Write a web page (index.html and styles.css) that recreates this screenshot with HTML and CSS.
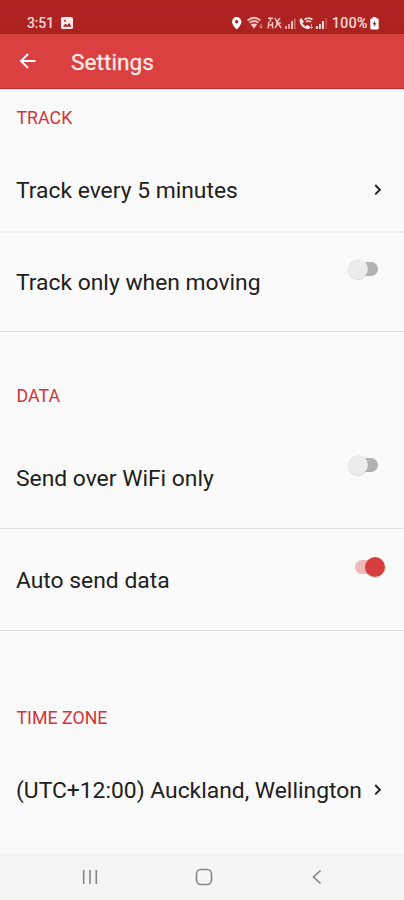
FILE: index.html
```html
<!DOCTYPE html>
<html lang="en">
<head>
<meta charset="utf-8">
<title>Settings</title>
<link rel="stylesheet" href="styles.css">
</head>
<body>
<div class="screen">
  <div class="status">
    <span class="time">3:51</span>
    <svg class="picture" width="12" height="12" viewBox="0 0 12 12"><rect width="12" height="12" rx="1.8" fill="#ffeceb"/><path d="M1.800 9.800 4.500 6.400l1.800 1.800 2-2.300 2.200 3.900z" fill="#ad2422"/><circle cx="4" cy="3.700" r="1" fill="#ad2422"/></svg>
    <svg class="indicators" width="98" height="16" viewBox="231 15 98 16" fill="none">
      <path fill="#fff" fill-rule="evenodd" d="M236.700 17a4.700 4.700 0 0 0-4.700 4.700c0 3.300 4.700 7.800 4.700 7.800s4.700-4.500 4.700-7.800a4.700 4.700 0 0 0-4.700-4.700zm0 3.100a1.700 1.700 0 1 1 0 3.400 1.700 1.700 0 0 1 0-3.400z"/>
      <g stroke="#f3c1be" stroke-width="1.800"><path d="M247.500 20.500q6.500-5.500 13 0M249.500 22.900q4.500-3.700 9 0"/><path d="M261 24v4m-1.500-1.500 1.500 1.500 1.500-1.500" stroke-width=".8"/></g>
      <path fill="#f6cbc8" d="m250.800 24.600 3.200 4 3.200-4q-3.200-2.200-6.400 0z"/>
      <path stroke="#f3c1be" stroke-width="1.500" d="M268 18.300h5M270.500 18v3.500M269 21.500l-1 7M272.500 22v6.500M268 25h5M275 18l2 4 3-4M276 23h5M275 28l3-5 3 5"/>
      <path fill="#e99792" d="M285 26h2v3h-2zm3-2h2v5h-2z"/><path fill="#f5c6c3" d="M291 21h2v8h-2z"/><path fill="#d97672" d="M294 18.500h1.500V29H294z"/>
      <path fill="#ffe9e7" d="M299.500 19.500c.8-1 1.700-1.200 2.500-.6l1.600 2.300c.3.800-.2 1.400-1.200 2.100.8 1.500 1.800 2.400 3.400 2.900.7-1 1.300-1.300 2.100-.9l2.200 1.500c.4.900-.2 1.700-1.300 2.200-5 .6-9.800-4.500-9.300-9.500z"/>
      <path stroke="#ffe4e2" stroke-width="1.600" d="M304.500 19.500q4-2.500 8 0M306 21.900q2.500-1.700 5 0"/><path stroke="#f0aaa6" d="M311.500 24v4.500m-1.500-1.500 1.500 1.500 1.500-1.500"/>
      <path fill="#ffe9e7" d="M316 26h1.800v3H316zm3-2h1.800v5H319zm3-3h1.800v8H322z"/><path fill="#d06360" d="M325.500 18h1.200v11h-1.200z"/>
    </svg>
    <span class="percent">100%</span>
    <svg class="battery" width="9" height="13" viewBox="0 0 9 14"><path fill="#fff" d="M2.500 0h4v1.500H8Q9 1.500 9 3v9q0 1.500-1.500 1.500h-6Q0 13.500 0 12V3q0-1.500 1-1.500h1.500z"/><path fill="#7d3230" d="M5 3.700 2.500 7.800h1.600L4 10.800l2.600-4.200H5z"/></svg>
  </div>
  <div class="appbar">
    <svg class="back" width="18" height="18" viewBox="0 0 18 18" fill="none" stroke="#fff" stroke-width="1.900"><path d="M16.500 9H2M9 2 2 9l7 7"/></svg>
    <h1>Settings</h1>
  </div>
  <main>
    <section class="track">
      <h2>TRACK</h2>
      <div class="row first"><span>Track every 5 minutes</span><svg class="chev" width="8" height="12" viewBox="0 0 8 12"><path d="m1.200 1 4.700 4.700-4.700 4.700"/></svg></div>
      <div class="row second"><span>Track only when moving</span><i class="switch"></i></div>
    </section>
    <section class="data">
      <h2>DATA</h2>
      <div class="row third"><span>Send over WiFi only</span><i class="switch"></i></div>
      <div class="row fourth"><span>Auto send data</span><i class="switch on"></i></div>
    </section>
    <section class="zone">
      <h2>TIME ZONE</h2>
      <div class="row last"><span>(UTC+12:00) Auckland, Wellington</span><svg class="chev" width="8" height="12" viewBox="0 0 8 12"><path d="m1.200 1 4.700 4.700-4.700 4.700"/></svg></div>
    </section>
  </main>
  <nav>
    <svg width="16" height="16" viewBox="0 0 16 16"><path d="M1.700 1v14M8 1v14M14.300 1v14"/></svg>
    <svg width="18" height="18" viewBox="0 0 18 18"><rect x="1.500" y="1.500" width="15" height="15" rx="4.500"/></svg>
    <svg width="10" height="16" viewBox="0 0 10 16"><path d="M8.500 1.500 1.500 8l7 6.500"/></svg>
  </nav>
</div>
</body>
</html>
```
FILE: styles.css
```css
* { box-sizing: border-box; }
body { margin: 0; font-family: Roboto, sans-serif; background: #fafafa; color: #202020; }
.screen { width: 404px; height: 900px; display: flex; flex-direction: column; overflow: hidden; }
svg { display: block; flex: none; }
.status { height: 34px; flex: none; background: linear-gradient(#b12523, #aa2220); display: flex; align-items: center; padding: 12px 25px 0 27px; color: #ffe4e2; }
.time { font-size: 14px; width: 34px; line-height: 16px; -webkit-text-stroke: .2px #ffe4e2; }
.indicators { margin-left: auto; }
.percent { font-size: 14px; line-height: 16px; margin-left: 3px; width: 38px; letter-spacing: .5px; white-space: nowrap; -webkit-text-stroke: .2px #ffe4e2; }
.appbar { height: 55px; flex: none; background: #db4040; border-bottom: 1px solid #cf2a2d; display: flex; align-items: center; padding-left: 19px; }
h1 { margin: 0 0 0 34px; padding-top: 1px; font-size: 22.500px; font-weight: 400; line-height: 28px; color: #ffeae8; -webkit-text-stroke: .3px #ffeae8; letter-spacing: .1px; }
main { flex: 1; }
h2 { margin: 0; font-size: 17.800px; font-weight: 400; line-height: 20px; color: #d43438; padding: 19px 16px 0 16.500px; }
section { display: flex; flex-direction: column; }
.track { height: 243px; }
.data { height: 299px; }
.data h2 { padding-top: 54px; }
.zone h2 { padding-top: 77px; }
.row { display: flex; justify-content: space-between; align-items: center; padding: 0 22px 0 16px; font-size: 22.850px; line-height: 26px; white-space: nowrap; border-bottom: 1px solid #dedede; flex: none; }
.row span { padding-top: 2px; }
.first { height: 105px; padding-top: 21px; border-bottom: 2px solid #f0f0f0; }
.second { height: 99px; }
.third { height: 123px; padding-top: 24px; }
.third span { padding-top: 0; }
.fourth { height: 102px; }
.last { height: 124px; border: 0; }
.chev { fill: none; stroke: #252525; stroke-width: 2; }
.switch { width: 30px; height: 20px; position: relative; margin: 0 4px 26px 0; }
.third .switch { margin-bottom: 28px; }
.switch::before { content: ""; position: absolute; left: 8px; top: 3px; width: 22px; height: 14px; border-radius: 7px; background: #b1b1b1; }
.switch::after { content: ""; position: absolute; left: 0; top: 0; width: 20px; height: 20px; border-radius: 50%; background: #ececec; box-shadow: 0 1px 1px #0002; }
.switch.on { margin-right: -3px; }
.switch.on::before { left: 0; background: #efb9bb; }
.switch.on::after { left: 10px; background: #d63d3f; }
nav { height: 47px; flex: none; background: #f5f5f5; display: flex; justify-content: space-between; align-items: center; padding: 0 82px; }
nav svg { fill: none; stroke: #858585; stroke-width: 1.600; }
nav svg:nth-child(2) { margin: 0 1px 0 -1px; }
```
